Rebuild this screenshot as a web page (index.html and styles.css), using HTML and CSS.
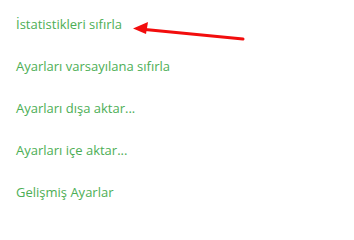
FILE: index.html
```html
<!DOCTYPE html>
<html lang="tr">
<head>
<meta charset="utf-8">
<link rel="stylesheet" href="styles.css">
</head>
<body>
<ul class="menu">
  <li class="item">İstatistikleri sıfırla</li>
  <li class="item">Ayarları varsayılana sıfırla</li>
  <li class="item">Ayarları dışa aktar...</li>
  <li class="item">Ayarları içe aktar...</li>
  <li class="item">Gelişmiş Ayarlar</li>
</ul>
<svg class="arrow" width="354" height="213" viewBox="0 0 354 213">
  <line x1="243" y1="39" x2="140" y2="29" stroke="#f20d0d" stroke-width="3" stroke-linecap="round"/>
  <polygon points="133,28.5 148,22 146,34" fill="#f20d0d"/>
</svg>
</body>
</html>
```
FILE: styles.css
```css
html, body {
  margin: 0;
  padding: 0;
  background: #ffffff;
}
body {
  position: relative;
  width: 354px;
  height: 213px;
  overflow: hidden;
  font-family: "Open Sans", "Noto Sans", sans-serif;
}
.menu {
  list-style: none;
  margin: 0;
  padding: 3px 0 0 16px;
}
.item {
  height: 42px;
  line-height: 42px;
  font-size: 13px;
  color: #4cae55;
}
.arrow {
  position: absolute;
  left: 0;
  top: 0;
}
```
